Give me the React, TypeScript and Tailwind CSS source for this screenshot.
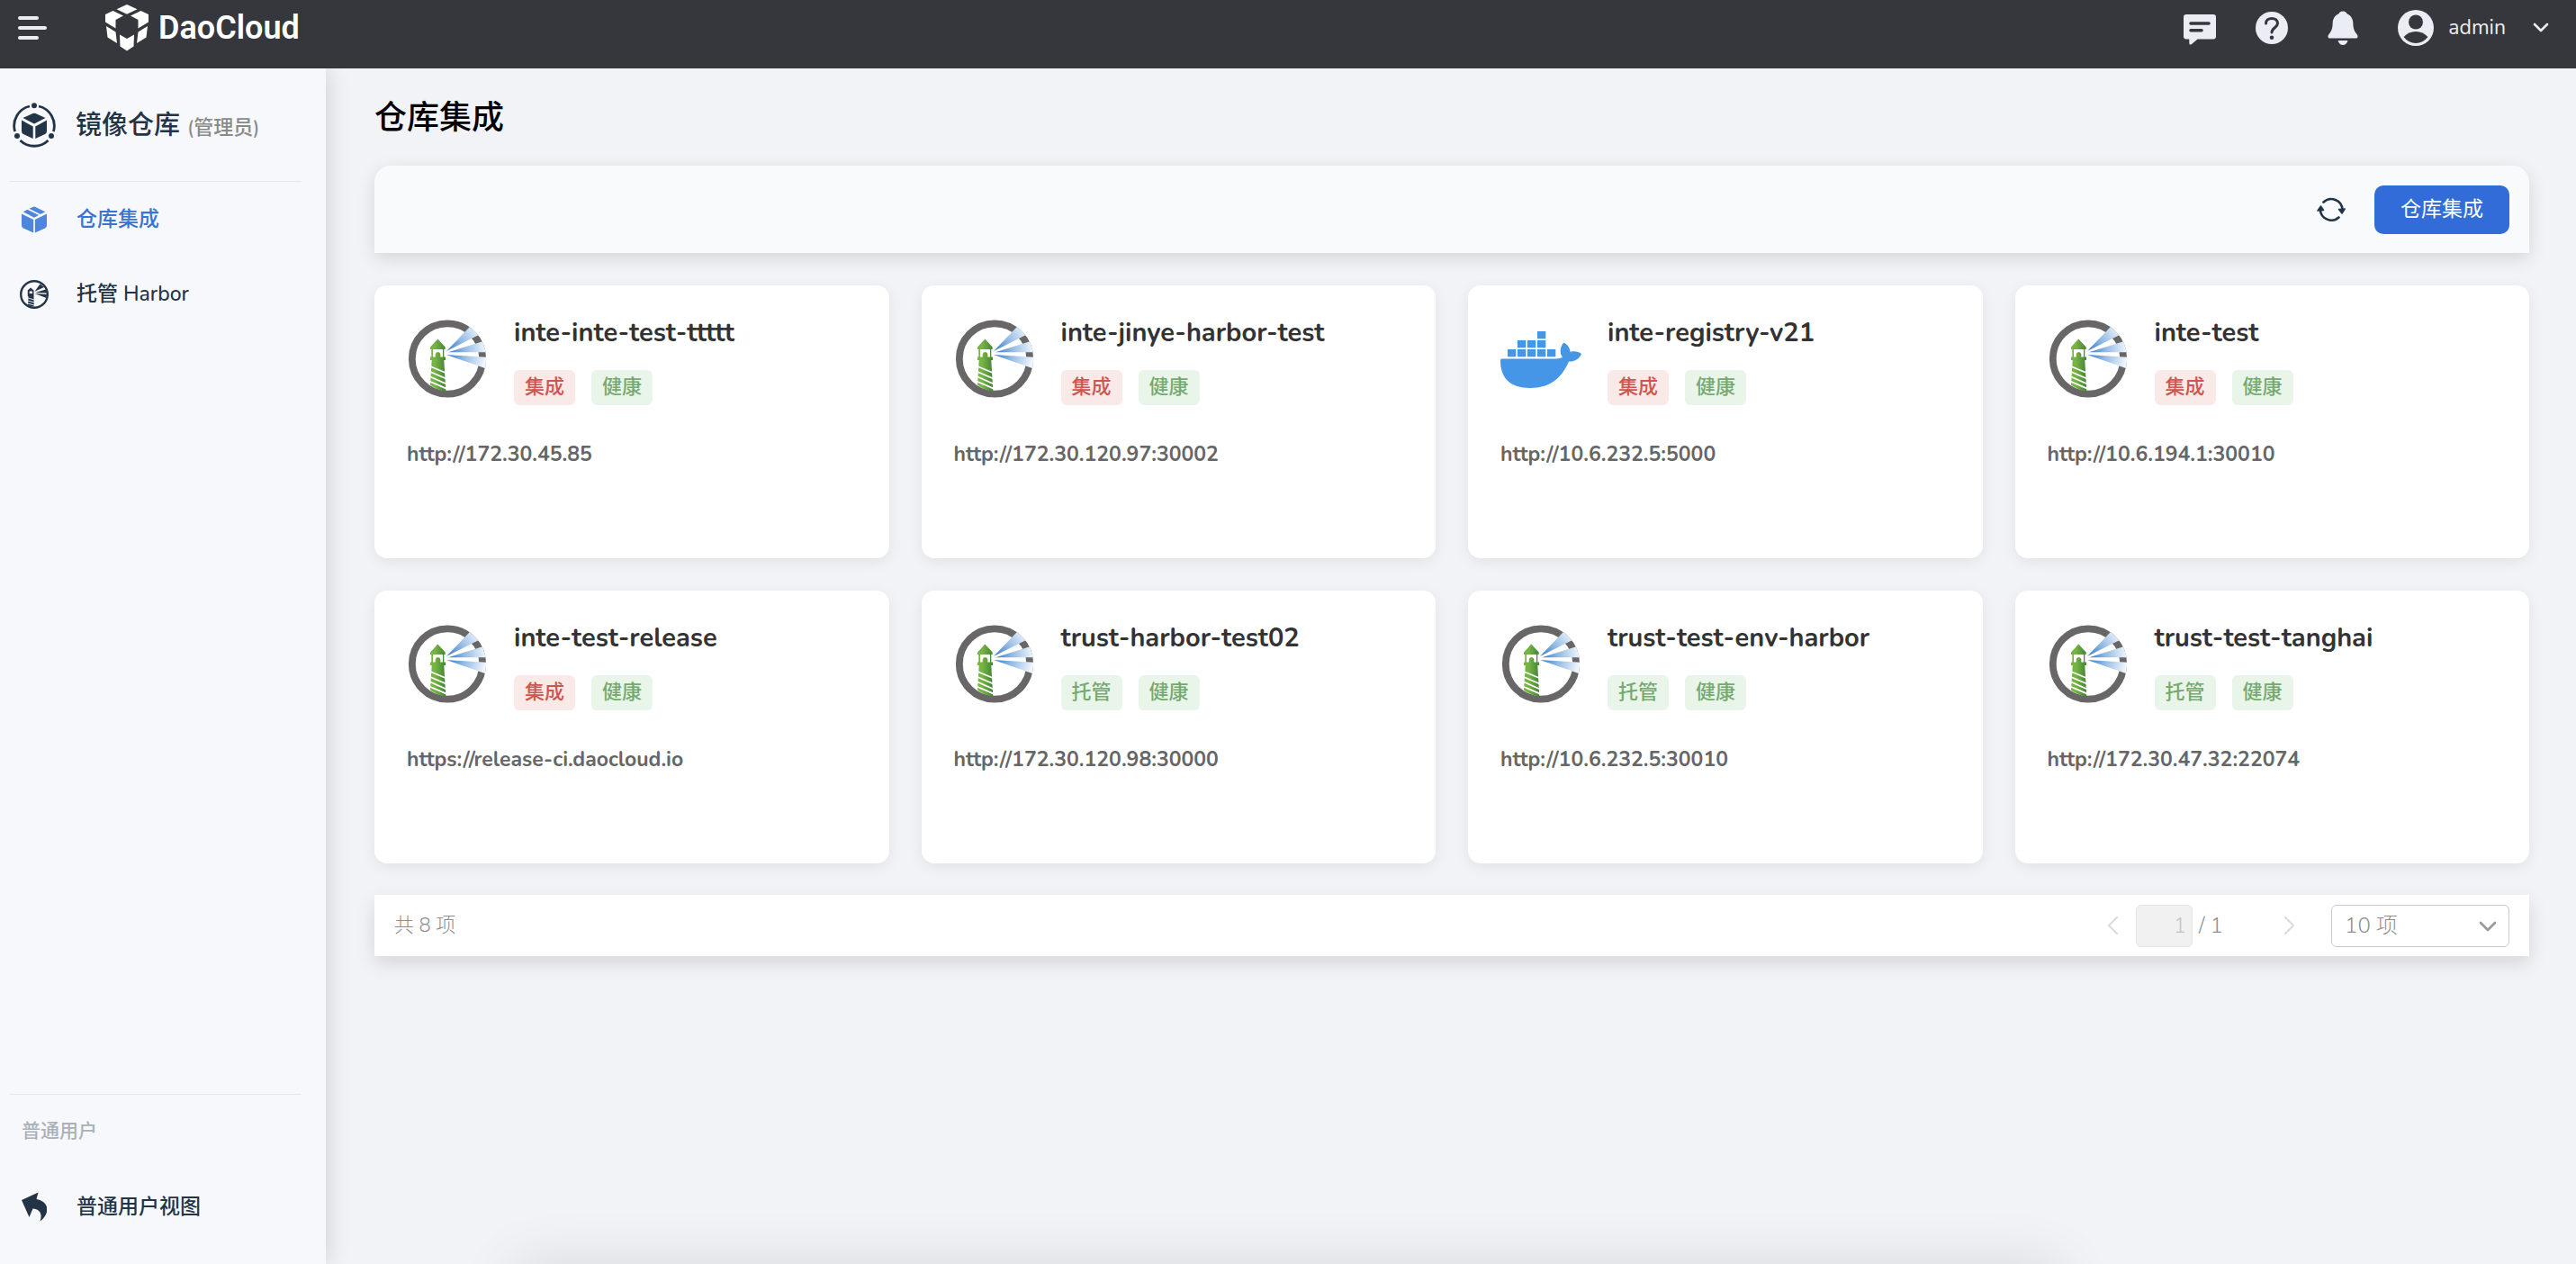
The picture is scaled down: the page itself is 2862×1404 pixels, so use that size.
import React from "react";

type Kind = "harbor" | "docker";
interface Registry {
  name: string;
  kind: Kind;
  mode: "集成" | "托管";
  url: string;
}

const registries: Registry[] = [
  { name: "inte-inte-test-ttttt", kind: "harbor", mode: "集成", url: "http://172.30.45.85" },
  { name: "inte-jinye-harbor-test", kind: "harbor", mode: "集成", url: "http://172.30.120.97:30002" },
  { name: "inte-registry-v21", kind: "docker", mode: "集成", url: "http://10.6.232.5:5000" },
  { name: "inte-test", kind: "harbor", mode: "集成", url: "http://10.6.194.1:30010" },
  { name: "inte-test-release", kind: "harbor", mode: "集成", url: "https://release-ci.daocloud.io" },
  { name: "trust-harbor-test02", kind: "harbor", mode: "托管", url: "http://172.30.120.98:30000" },
  { name: "trust-test-env-harbor", kind: "harbor", mode: "托管", url: "http://10.6.232.5:30010" },
  { name: "trust-test-tanghai", kind: "harbor", mode: "托管", url: "http://172.30.47.32:22074" },
];

function HarborLogo() {
  return (
    <svg viewBox="0 0 90 90" className="size-[90px]" aria-hidden="true">
      <defs>
        <linearGradient id="tower" x1="0" x2="1">
          <stop offset="0.3" stopColor="#76b543" />
          <stop offset="1" stopColor="#45823a" />
        </linearGradient>
        <radialGradient id="beam" gradientUnits="userSpaceOnUse" cx="44" cy="39" r="44">
          <stop offset="0.1" stopColor="#3f82cc" />
          <stop offset="0.45" stopColor="#8fb8e3" />
          <stop offset="1" stopColor="#f0f6fc" />
        </radialGradient>
        <clipPath id="disc">
          <circle cx="45" cy="46.500" r="43.300" />
        </clipPath>
      </defs>
      <circle cx="45" cy="46.500" r="39.200" fill="none" stroke="#696667" strokeWidth="7.800" />
      <g clipPath="url(#disc)" fill="url(#beam)">
        <path d="M44 38 L72.300 8.500 L85 17.500 Z" />
        <path d="M46 39.300 L91 25 L91 39.300 Z" />
        <path d="M44 42 L91 45 L91 58.500 Z" />
      </g>
      <path d="M34.300 24.500 L42.700 33.500 V36 H41.300 V44.500 H43 V48 H41.300 L43.300 82.500 Q34 81.500 26 75.500 L27.700 48 H26 V44.500 H27.300 V36 H26 V33.500 Z" fill="url(#tower)" />
      <path d="M29 36 H40 V44.500 H37.300 V41.500 Q37 39 34.500 39 Q32 39 31.700 41.500 V44.500 H29 Z" fill="#fff" />
      <path d="M26 55 L43 62 M26 61 L43.500 68.500 M26 66.500 L43.500 74.300 M25 71.500 L44 79.700" stroke="#fff" strokeWidth="1.800" />
    </svg>
  );
}

function DockerLogo() {
  const boxes = [
    [41, 16],
    [19, 26], [30, 26], [41, 26],
    [8, 36], [19, 36], [30, 36], [41, 36], [52, 36],
  ];
  return (
    <svg viewBox="0 0 90 90" className="size-[90px]" fill="#4596e6" aria-hidden="true">
      {boxes.map(([x, y]) => (
        <rect key={`${x}-${y}`} x={x} y={y} width="9.300" height="8.300" />
      ))}
      <path d="M1.500 46.500 H62 Q66 46.300 69 45 C65.500 40 66 33 70.500 28.500 C75 31 77.500 35 77.500 38.800 C82 37.500 87 38.500 90 41 C87.500 47 82 50 76 49.500 C68 68 55 79 33 79 C11 79 0 68 0 48.500 Q0 46.500 1.500 46.500 Z" />
    </svg>
  );
}

function DaoMark() {
  return (
    <svg viewBox="0 0 50 52" className="h-[52px] w-[50px]" fill="#fff" aria-hidden="true">
      <path d="M25 0 L36.500 5.300 L25 10.800 L13.500 5.300 Z" />
      <path d="M9.500 7 L21 12.500 L12.500 17 V26.500 L1 19.500 V11 Z" />
      <path d="M40.500 7 L29 12.500 L37.500 17 V26.500 L49 19.500 V11 Z" />
      <path d="M2 24 L12.500 30.500 L14 43 L3.500 36.500 Z" />
      <path d="M48 24 L37.500 30.500 L36 43 L46.500 36.500 Z" />
      <path d="M17 33.500 L25 38 L33 33.500 L32.500 46.500 L25 51.500 L17.500 46.500 Z" />
    </svg>
  );
}

function ProductIcon() {
  return (
    <svg viewBox="0 0 48 50" className="h-[50px] w-12" fill="#243447" aria-hidden="true">
      <g fill="none" stroke="#243447" strokeWidth="2.800">
        <path d="M19 4 A22.300 22.300 0 0 0 2.600 32" />
        <path d="M29 4 A22.300 22.300 0 0 1 45.400 32" />
        <path d="M8.500 42 A22.300 22.300 0 0 0 39.500 42" />
      </g>
      <circle cx="24" cy="3.200" r="3" />
      <circle cx="5" cy="37" r="3" />
      <circle cx="43" cy="37" r="3" />
      <path d="M22.500 12 Q24 11.500 25.500 12 L36.500 17 L24 23.500 L11.500 17 Z" />
      <path d="M10 19.500 L22.700 26.500 V40 L12 35 Q10 34 10 31.500 Z" />
      <path d="M38 19.500 L25.300 26.500 V40 L36 35 Q38 34 38 31.500 Z" />
    </svg>
  );
}

function BoxIcon() {
  return (
    <svg viewBox="0 0 28 30" className="h-[30px] w-7" fill="#4d86dc" aria-hidden="true">
      <path d="M8.500 2.700 L13 0.800 Q14 0.400 15 0.800 L26.300 6.200 L21 9 Z" />
      <path d="M1.700 6.300 L6.500 3.800 L19 10 L14 12.800 Z" />
      <path d="M0 8.500 L13.100 15 V29.500 L2 24.500 Q0 23.500 0 21.500 Z" />
      <path d="M28 8.500 L14.900 15 V29.500 L26 24.500 Q28 23.500 28 21.500 Z" />
    </svg>
  );
}

function HarborIcon() {
  return (
    <svg viewBox="0 0 32 32" className="size-8" fill="#243447" aria-hidden="true">
      <circle cx="16" cy="16" r="14.800" fill="none" stroke="#243447" strokeWidth="2.400" />
      <path d="M12 8.500 L15.500 11.500 V18 L15.800 29.500 L9 28.500 L9.500 18 H8.800 V11.500 Z" />
      <path d="M10.700 12.500 H14 V15 H10.700 Z" fill="#f7f8fc" />
      <path d="M9 20 L16 22 M9 23 L16 25 M9 26 L16 28" stroke="#f7f8fc" strokeWidth="0.900" />
      <path d="M16.500 12.800 L22.500 4.500 L27 8 Z M17 14 L29 10.500 L30 14.500 Z M16.500 15 L30 16 L29.500 20 Z" />
    </svg>
  );
}

const navText = "text-[23px] leading-8 font-medium";

export default function App() {
  return (
    <div className="flex min-h-screen flex-col bg-[#f1f3f7] font-['Nunito','Noto_Sans','Noto_Sans_CJK_SC',sans-serif] text-[#243447]">
      <header className="z-20 flex h-[76px] items-start justify-between bg-[#36373c] text-[#ebedf5]">
        <div className="flex items-center pt-[5px] pl-5">
          <button aria-label="菜单" className="flex flex-col gap-[7px]">
            <span className="h-1 w-[23px] rounded-full bg-[#ebedf5]" />
            <span className="h-1 w-8 rounded-full bg-[#ebedf5]" />
            <span className="h-1 w-[23px] rounded-full bg-[#ebedf5]" />
          </button>
          <a href="#" className="ml-16 flex items-center gap-2.5 text-white">
            <DaoMark />
            <span className="font-['Roboto',sans-serif] text-[36px] leading-[52px] font-semibold">DaoCloud</span>
          </a>
        </div>
        <div className="flex h-[61px] items-center pr-[30px]">
          <button aria-label="消息" className="mr-11">
            <svg viewBox="0 0 36 34" className="mt-1 h-[34px] w-9" aria-hidden="true">
              <path d="M3 0 H33 Q36 0 36 3 V24.500 Q36 27.500 33 27.500 H15.500 L9 33 Q6.500 34.500 6.300 32 V27.500 H3 Q0 27.500 0 24.500 V3 Q0 0 3 0 Z" fill="#ebedf5" />
              <path d="M8 10 H28 M8 17.700 H20" stroke="#36373c" strokeWidth="3.600" strokeLinecap="round" />
            </svg>
          </button>
          <button aria-label="帮助" className="mr-11">
            <svg viewBox="0 0 36 36" className="size-9" aria-hidden="true">
              <circle cx="18" cy="18" r="18" fill="#ebedf5" />
              <path d="M11.500 13 C11.500 5.500 24.500 5.500 24.500 13 C24.500 17.500 18 18 18 23" fill="none" stroke="#36373c" strokeWidth="3" strokeLinecap="round" />
              <circle cx="18" cy="28.700" r="2.300" fill="#36373c" />
            </svg>
          </button>
          <button aria-label="通知" className="mr-11">
            <svg viewBox="0 0 34 38" className="h-[38px] w-[34px]" fill="#ebedf5" aria-hidden="true">
              <path d="M17 0.500 C20 0.500 21 2 21.500 3.200 C26 5 28 9 28.300 13 C28.500 19 29 21.500 32.500 26 C34 28 34 30.500 31.500 30.500 H2.500 C0 30.500 0 28 1.500 26 C5 21.500 5.500 19 5.700 13 C6 9 8 5 12.500 3.200 C13 2 14 0.500 17 0.500 Z" />
              <path d="M11.500 33 H22.500 Q21 38 17 38 Q13 38 11.500 33 Z" />
            </svg>
          </button>
          <button className="flex items-center">
            <svg viewBox="0 0 40 40" className="size-10" aria-hidden="true">
              <circle cx="20" cy="20" r="20" fill="#ebedf5" />
              <circle cx="20" cy="13.500" r="8" fill="#36373c" />
              <path d="M6.500 30 Q12 24 20 24 Q28 24 33.500 30 Q28 37 20 37 Q12 37 6.500 30 Z" fill="#36373c" />
            </svg>
            <span className="ml-4 text-[23px] leading-8 font-normal">admin</span>
            <svg viewBox="0 0 18 12" className="ml-[30px] h-3 w-[18px]" fill="none" stroke="#ebedf5" strokeWidth="2.600" strokeLinecap="round" strokeLinejoin="round" aria-hidden="true">
              <path d="M2 2 L9 9 L16 2" />
            </svg>
          </button>
        </div>
      </header>

      <div className="flex flex-1">
        <aside className="z-10 flex w-[362px] shrink-0 flex-col bg-[#f7f8fc] shadow-[4px_0_24px_rgba(0,0,0,0.12)]">
          <div className="flex h-[125px] items-center pl-3.5">
            <ProductIcon />
            <div className="ml-[22px] flex items-baseline gap-2 pt-0.5">
              <h2 className="text-[29px] leading-10 font-medium">镜像仓库</h2>
              <span className="text-[22px] leading-8 font-medium text-[#888c88]">(管理员)</span>
            </div>
          </div>
          <hr className="mr-[27px] ml-[11px] border-[#e4e6ea]" />
          <nav className="flex flex-col">
            <a href="#" className="flex h-[83px] items-center pl-6 text-[#3b74d0]">
              <BoxIcon />
              <span className={`ml-[33px] ${navText}`}>仓库集成</span>
            </a>
            <a href="#" className="flex h-[83px] items-center pl-[22px]">
              <HarborIcon />
              <span className={`ml-[31px] ${navText}`}>托管 Harbor</span>
            </a>
          </nav>
          <div className="mt-auto pb-[22px]">
            <hr className="mr-[27px] ml-[11px] border-[#e4e6ea]" />
            <p className="pt-6 pl-6 text-[21px] leading-8 font-medium text-[#aab0b7]">普通用户</p>
            <a href="#" className="mt-[27px] flex h-[83px] items-center pl-6">
              <svg viewBox="0 0 28 33" className="h-[33px] w-7" fill="#243447" aria-hidden="true">
                <path d="M0 9 L18.500 0.500 L16.500 8 C31 10.500 32 24 20.500 32.500 C23.500 24 20 19 12.500 18.500 L8.500 28 Z" />
              </svg>
              <span className={`ml-[33px] ${navText}`}>普通用户视图</span>
            </a>
          </div>
        </aside>

        <main className="min-w-0 flex-1 pt-[30px] pr-[52px] pl-[54px]">
          <h1 className="text-[36px] leading-[52px] font-medium text-black">仓库集成</h1>
          <div className="mt-[26px] flex h-[97px] items-center justify-end rounded-t-[18px] bg-[#f9fafc] pr-[22px] shadow-[0_6px_20px_rgba(0,0,0,0.12)]">
            <button aria-label="刷新" className="mr-8">
              <svg viewBox="0 0 32 28" className="h-7 w-8" fill="none" stroke="#243447" strokeWidth="2.600" strokeLinecap="round" aria-hidden="true">
                <path d="M7.500 5.500 A12.500 12.500 0 0 1 28.500 14" />
                <path d="M24.500 22.500 A12.500 12.500 0 0 1 3.800 14" />
                <path d="M24.500 13.500 L31.200 13 L28 18 Z M1 15 L4.500 10 L7.500 14.500 Z" fill="#243447" strokeWidth="1.500" strokeLinejoin="round" />
              </svg>
            </button>
            <button className="h-[54px] rounded-[10px] bg-[#326cd8] px-[29px] text-[23px] leading-8 font-normal text-white">仓库集成</button>
          </div>

          <div className="mt-9 grid grid-cols-4 gap-9">
            {registries.map((r) => (
              <article key={r.name} className="h-[303px] rounded-[14px] bg-white px-9 pt-[35px] shadow-[0_4px_16px_rgba(0,0,0,0.07)]">
                <div className="flex">
                  {r.kind === "harbor" ? <HarborLogo /> : <DockerLogo />}
                  <div className="ml-[29px]">
                    <h3 className="text-[29px] leading-9 font-bold text-[#333]">{r.name}</h3>
                    <div className="mt-[23px] flex gap-[18px] text-[22px] leading-[39px] font-medium">
                      <span className={r.mode === "集成" ? "rounded-md bg-[#f9e9e7] px-3 text-[#cf5550]" : "rounded-md bg-[#e9f5e8] px-3 text-[#76a871]"}>{r.mode}</span>
                      <span className="rounded-md bg-[#e9f5e8] px-3 text-[#76a871]">健康</span>
                    </div>
                  </div>
                </div>
                <a href={r.url} className="mt-[39px] block text-[23px] leading-8 font-bold text-[#666]">{r.url}</a>
              </article>
            ))}
          </div>

          <footer className="mt-[35px] flex h-[68px] items-center justify-between bg-white px-[22px] text-[#8f8f8f] shadow-[0_8px_20px_rgba(0,0,0,0.12)]">
            <span className="text-[22px] leading-8 font-light">共 8 项</span>
            <div className="flex items-center text-[24px] leading-8 font-light">
              <button aria-label="上一页" className="mr-5">
                <svg viewBox="0 0 12 20" className="h-5 w-3" fill="none" stroke="#ddd" strokeWidth="2.200" strokeLinecap="round" strokeLinejoin="round" aria-hidden="true">
                  <path d="M11 1 L2 10 L11 19" />
                </svg>
              </button>
              <input aria-label="页码" disabled defaultValue="1" className="h-[47px] w-[63px] rounded-md border border-[#e4e4e8] bg-[#f1f1f1] pr-1.5 text-right text-[#c4c4c4]" />
              <span className="ml-[7px]">/ 1</span>
              <button aria-label="下一页" className="mr-10 ml-[68px]">
                <svg viewBox="0 0 12 20" className="h-5 w-3" fill="none" stroke="#ddd" strokeWidth="2.200" strokeLinecap="round" strokeLinejoin="round" aria-hidden="true">
                  <path d="M1 1 L10 10 L1 19" />
                </svg>
              </button>
              <div className="relative">
                <select aria-label="每页条数" className="h-[47px] w-[198px] appearance-none rounded-md border border-[#c9c9d6] bg-white pl-3.5">
                  <option>10 项</option>
                </select>
                <svg viewBox="0 0 20 12" className="pointer-events-none absolute top-[18px] right-3.5 h-3 w-5" fill="none" stroke="#999" strokeWidth="2.600" strokeLinecap="round" strokeLinejoin="round" aria-hidden="true">
                  <path d="M2 2 L10 10 L18 2" />
                </svg>
              </div>
            </div>
          </footer>
        </main>
      </div>
      <div className="pointer-events-none fixed inset-x-[20%] -bottom-20 h-20 shadow-[0_0_64px_rgba(0,0,0,0.11)]" />
    </div>
  );
}
